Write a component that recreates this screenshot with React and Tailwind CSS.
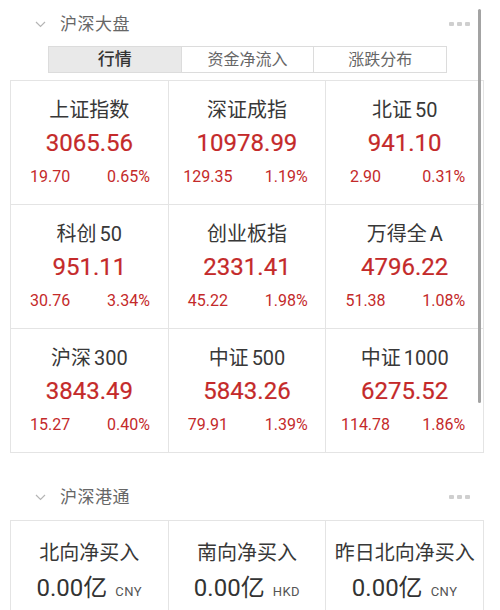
import React from "react";

const CJK = "font-['Roboto','Noto_Sans_CJK_SC',sans-serif]";

const indices = [
  { name: "上证指数", value: "3065.56", chg: "19.70", pct: "0.65%" },
  { name: "深证成指", value: "10978.99", chg: "129.35", pct: "1.19%" },
  { name: "北证", tail: "50", value: "941.10", chg: "2.90", pct: "0.31%" },
  { name: "科创", tail: "50", value: "951.11", chg: "30.76", pct: "3.34%" },
  { name: "创业板指", value: "2331.41", chg: "45.22", pct: "1.98%" },
  { name: "万得全", tail: "A", value: "4796.22", chg: "51.38", pct: "1.08%" },
  { name: "沪深", tail: "300", value: "3843.49", chg: "15.27", pct: "0.40%" },
  { name: "中证", tail: "500", value: "5843.26", chg: "79.91", pct: "1.39%" },
  { name: "中证", tail: "1000", value: "6275.52", chg: "114.78", pct: "1.86%" },
];

const flows = [
  { name: "北向净买入", unit: "CNY" },
  { name: "南向净买入", unit: "HKD" },
  { name: "昨日北向净买入", unit: "CNY" },
];

function Chevron() {
  return (
    <svg width="11" height="7" viewBox="0 0 11 7" className="shrink-0">
      <polyline points="1,1 5.5,5.5 10,1" fill="none" stroke="#b5b5b5" strokeWidth="1.2" />
    </svg>
  );
}

function Dots() {
  return (
    <div className="flex gap-[3px]">
      <span className="w-[5px] h-[4px] bg-[#cfcfcf] rounded-[1px]" />
      <span className="w-[5px] h-[4px] bg-[#cfcfcf] rounded-[1px]" />
      <span className="w-[5px] h-[4px] bg-[#cfcfcf] rounded-[1px]" />
    </div>
  );
}

function Header({ title }) {
  return (
    <div className="flex items-center h-[28px] pl-[35px] pr-[30px]">
      <Chevron />
      <span className="ml-[14px] text-[17px] leading-[28px] text-[#666666] tracking-[0.5px]">{title}</span>
      <div className="flex-1" />
      <Dots />
    </div>
  );
}

export default function App() {
  return (
    <div className={`relative w-[500px] h-[610px] overflow-hidden bg-white ${CJK}`}>
      <div className="pt-[10px]">
        <Header title="沪深大盘" />
        <div className="mt-[8px] ml-[48px] w-[399px] h-[27px] flex border border-[#dcdcdc]">
          <div className="flex-1 flex items-center justify-center bg-[#e9e9e9] text-[17px] text-[#333] font-medium">行情</div>
          <div className="flex-1 flex items-center justify-center border-l border-[#dcdcdc] text-[16px] text-[#666]">资金净流入</div>
          <div className="flex-1 flex items-center justify-center border-l border-[#dcdcdc] text-[16px] text-[#666]">涨跌分布</div>
        </div>
        <div className="mt-[7px] ml-[10px] w-[474px] grid grid-cols-3 gap-px bg-[#e4e4e4] border border-[#e4e4e4]">
          {indices.map((it) => (
            <div key={it.name + (it.tail || "")} className="bg-white h-[123px] flex flex-col items-center pt-[17px]">
              <div className="h-[24px] leading-[24px] text-[20px] text-[#383838]">
                {it.name}
                {it.tail && <span className="ml-[3px]">{it.tail}</span>}
              </div>
              <div className="mt-[7px] h-[28px] leading-[28px] text-[24px] text-[#c42a2a] [-webkit-text-stroke:0.2px_#c42a2a]">{it.value}</div>
              <div className="mt-[10px] w-full grid grid-cols-2 h-[20px] leading-[20px] text-[16px] text-[#c42a2a]">
                <span className="text-center">{it.chg}</span>
                <span className="text-center">{it.pct}</span>
              </div>
            </div>
          ))}
        </div>
        <div className="mt-[30px]">
          <Header title="沪深港通" />
        </div>
        <div className="mt-[9px] ml-[10px] w-[474px] grid grid-cols-3 gap-px bg-[#e4e4e4] border border-[#e4e4e4]">
          {flows.map((f) => (
            <div key={f.name} className="bg-white h-[110px] flex flex-col items-center pt-[19px]">
              <div className="h-[26px] leading-[26px] text-[20px] text-[#383838]">{f.name}</div>
              <div className="mt-[7px] h-[30px] flex items-baseline">
                <span className="text-[24px] leading-[30px] text-[#333]">0.00亿</span>
                <span className="ml-[8px] text-[13px] tracking-[0.5px] text-[#555]">{f.unit}</span>
              </div>
            </div>
          ))}
        </div>
      </div>
      <div className="absolute left-[478px] top-[9px] w-[3px] h-[394px] rounded-full bg-[#a3a3a3]" />
    </div>
  );
}
